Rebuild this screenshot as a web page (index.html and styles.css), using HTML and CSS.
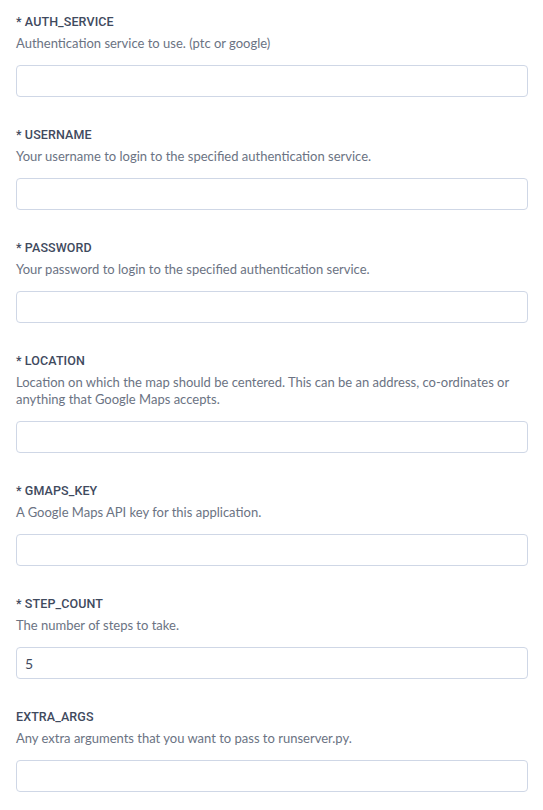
FILE: index.html
```html
<!DOCTYPE html>
<html>
<head>
<meta charset="utf-8">
<link rel="stylesheet" href="styles.css">
</head>
<body>
<form class="config">
  <div class="field">
    <div class="label">* AUTH_SERVICE</div>
    <div class="desc">Authentication service to use. (ptc or google)</div>
    <input class="input" type="text" value="">
  </div>
  <div class="field">
    <div class="label">* USERNAME</div>
    <div class="desc">Your username to login to the specified authentication service.</div>
    <input class="input" type="text" value="">
  </div>
  <div class="field">
    <div class="label">* PASSWORD</div>
    <div class="desc">Your password to login to the specified authentication service.</div>
    <input class="input" type="text" value="">
  </div>
  <div class="field">
    <div class="label">* LOCATION</div>
    <div class="desc">Location on which the map should be centered. This can be an address, co-ordinates or anything that Google Maps accepts.</div>
    <input class="input" type="text" value="">
  </div>
  <div class="field">
    <div class="label">* GMAPS_KEY</div>
    <div class="desc">A Google Maps API key for this application.</div>
    <input class="input" type="text" value="">
  </div>
  <div class="field">
    <div class="label">* STEP_COUNT</div>
    <div class="desc">The number of steps to take.</div>
    <input class="input" type="text" value="5">
  </div>
  <div class="field">
    <div class="label">EXTRA_ARGS</div>
    <div class="desc">Any extra arguments that you want to pass to runserver.py.</div>
    <input class="input" type="text" value="">
  </div>
</form>
</body>
</html>
```
FILE: styles.css
```css
html, body {
  margin: 0;
  padding: 0;
  background: #ffffff;
}
body {
  font-family: Lato, "Open Sans", sans-serif;
}
.config {
  display: flex;
  flex-direction: column;
  gap: 28px;
  padding: 12px 15px 0 16px;
}
.field {
  display: flex;
  flex-direction: column;
}
.label {
  font-family: Roboto, Lato, sans-serif;
  font-size: 12.5px;
  line-height: 20px;
  height: 20px;
  font-weight: 500;
  color: #3f4a5e;
  letter-spacing: 0.1px;
}
.desc {
  margin-top: 2px;
  padding: 0.5px 0;
  font-size: 13px;
  line-height: 17px;
  color: #6b7383;
}
.input {
  margin-top: 13px;
  box-sizing: border-box;
  height: 32px;
  width: 512px;
  border: 1px solid #cfd7e6;
  border-radius: 4px;
  padding: 0 8px;
  font-family: inherit;
  font-size: 14px;
  color: #3f4a5e;
  background: #fff;
  outline: none;
}
```
